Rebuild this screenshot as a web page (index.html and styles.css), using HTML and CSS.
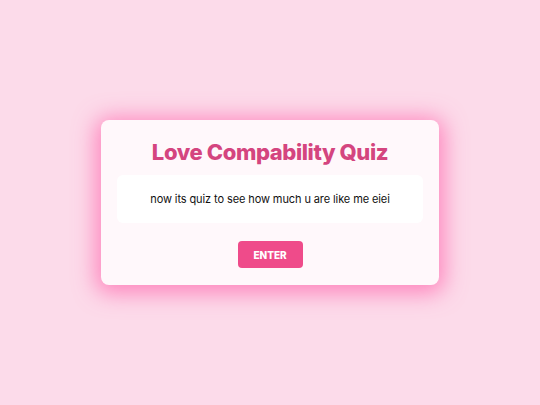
FILE: index.html
```html
<!DOCTYPE html>
<html lang="en">
<head>
<meta charset="utf-8">
<title>Love Compability Quiz</title>
<link rel="stylesheet" href="styles.css">
</head>
<body>
<main class="page">
  <section class="card">
    <h1 class="title">Love Compability Quiz</h1>
    <div class="intro">
      <p class="intro-text">now its quiz to see how much u are like me eiei</p>
    </div>
    <button class="enter" type="button">ENTER</button>
  </section>
</main>
</body>
</html>
```

FILE: styles.css
```css
html, body {
  margin: 0;
  padding: 0;
}
body {
  background: #fcdbea;
  font-family: "Inter", "Noto Sans", sans-serif;
}
.page {
  height: 405px;
  display: flex;
  align-items: center;
  justify-content: center;
}
.card {
  box-sizing: border-box;
  width: 338px;
  height: 165px;
  padding: 16px 16px 17px;
  background: #fff8fb;
  border-radius: 8px;
  box-shadow: 0 3px 22px 5px rgba(255, 95, 170, 0.7);
  display: flex;
  flex-direction: column;
  align-items: center;
}
.title {
  margin: 0;
  font-size: 22px;
  line-height: 33px;
  font-weight: 800;
  color: #d4457f;
  letter-spacing: -0.4px;
}
.intro {
  box-sizing: border-box;
  align-self: stretch;
  margin-top: 6px;
  height: 48px;
  background: #ffffff;
  border-radius: 6px;
  display: flex;
  align-items: center;
  justify-content: center;
}
.intro-text {
  margin: 0;
  font-size: 11px;
  color: #111111;
  letter-spacing: -0.1px;
}
.enter {
  margin-top: 18px;
  width: 65px;
  height: 27px;
  border: none;
  border-radius: 4px;
  background: #ef4b8a;
  color: #ffffff;
  font-family: inherit;
  font-size: 10px;
  font-weight: 800;
  padding: 0;
}
```
